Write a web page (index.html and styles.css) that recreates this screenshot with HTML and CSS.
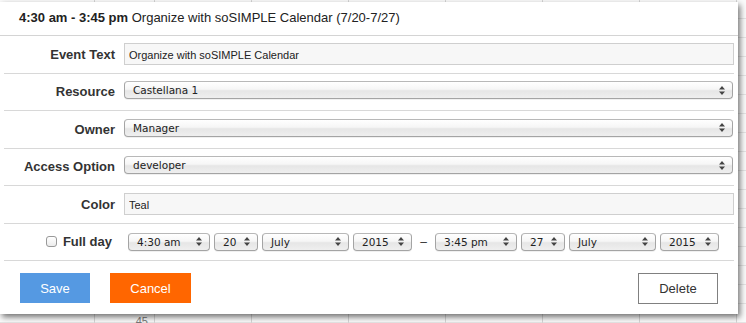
FILE: index.html
```html
<!DOCTYPE html>
<html lang="en">
<head>
    <meta charset="UTF-8">
    <title>Edit Event</title>
    <link rel="stylesheet" href="styles.css">
</head>
<body>
    <div class="calendar">
        <div class="cal-top"></div>
        <div class="cal-grid">
            <div class="cal-col gutter"></div>
            <div class="cal-col times"><span class="time-label">45</span></div>
            <div class="cal-col day"></div>
            <div class="cal-col day"></div>
            <div class="cal-col day"></div>
            <div class="cal-col day"></div>
            <div class="cal-col day"></div>
            <div class="cal-col day"></div>
            <div class="cal-col rest"></div>
        </div>
    </div>

    <div class="dialog">
        <div class="dialog-title"><strong>4:30 am - 3:45 pm</strong> Organize with soSIMPLE Calendar (7/20-7/27)</div>

        <div class="form">
            <div class="row">
                <label class="label">Event Text</label>
                <div class="control">
                    <input class="text-input" type="text" value="Organize with soSIMPLE Calendar">
                </div>
            </div>

            <div class="row">
                <label class="label">Resource</label>
                <div class="control">
                    <div class="select wide"><span>Castellana 1</span>
                        <svg class="arrows" width="6" height="9" viewBox="0 0 6 9"><path d="M3 0L6 3.5H0Z M3 9L6 5.5H0Z" fill="#444"/></svg>
                    </div>
                </div>
            </div>

            <div class="row">
                <label class="label">Owner</label>
                <div class="control">
                    <div class="select wide"><span>Manager</span>
                        <svg class="arrows" width="6" height="9" viewBox="0 0 6 9"><path d="M3 0L6 3.5H0Z M3 9L6 5.5H0Z" fill="#444"/></svg>
                    </div>
                </div>
            </div>

            <div class="row">
                <label class="label">Access Option</label>
                <div class="control">
                    <div class="select wide"><span>developer</span>
                        <svg class="arrows" width="6" height="9" viewBox="0 0 6 9"><path d="M3 0L6 3.5H0Z M3 9L6 5.5H0Z" fill="#444"/></svg>
                    </div>
                </div>
            </div>

            <div class="row">
                <label class="label">Color</label>
                <div class="control">
                    <input class="text-input" type="text" value="Teal">
                </div>
            </div>

            <div class="row">
                <label class="label fullday"><span class="checkbox"></span>Full day</label>
                <div class="control dates">
                    <div class="select w-time"><span>4:30 am</span>
                        <svg class="arrows" width="6" height="9" viewBox="0 0 6 9"><path d="M3 0L6 3.5H0Z M3 9L6 5.5H0Z" fill="#444"/></svg>
                    </div>
                    <div class="select w-day"><span>20</span>
                        <svg class="arrows" width="6" height="9" viewBox="0 0 6 9"><path d="M3 0L6 3.5H0Z M3 9L6 5.5H0Z" fill="#444"/></svg>
                    </div>
                    <div class="select w-month"><span>July</span>
                        <svg class="arrows" width="6" height="9" viewBox="0 0 6 9"><path d="M3 0L6 3.5H0Z M3 9L6 5.5H0Z" fill="#444"/></svg>
                    </div>
                    <div class="select w-year"><span>2015</span>
                        <svg class="arrows" width="6" height="9" viewBox="0 0 6 9"><path d="M3 0L6 3.5H0Z M3 9L6 5.5H0Z" fill="#444"/></svg>
                    </div>
                    <span class="dash">&ndash;</span>
                    <div class="select w-time"><span>3:45 pm</span>
                        <svg class="arrows" width="6" height="9" viewBox="0 0 6 9"><path d="M3 0L6 3.5H0Z M3 9L6 5.5H0Z" fill="#444"/></svg>
                    </div>
                    <div class="select w-day"><span>27</span>
                        <svg class="arrows" width="6" height="9" viewBox="0 0 6 9"><path d="M3 0L6 3.5H0Z M3 9L6 5.5H0Z" fill="#444"/></svg>
                    </div>
                    <div class="select w-month"><span>July</span>
                        <svg class="arrows" width="6" height="9" viewBox="0 0 6 9"><path d="M3 0L6 3.5H0Z M3 9L6 5.5H0Z" fill="#444"/></svg>
                    </div>
                    <div class="select w-year"><span>2015</span>
                        <svg class="arrows" width="6" height="9" viewBox="0 0 6 9"><path d="M3 0L6 3.5H0Z M3 9L6 5.5H0Z" fill="#444"/></svg>
                    </div>
                </div>
            </div>
        </div>

        <div class="actions">
            <button class="btn btn-save">Save</button>
            <button class="btn btn-cancel">Cancel</button>
            <button class="btn btn-delete">Delete</button>
        </div>
    </div>
</body>
</html>
```

FILE: styles.css
```css
* {
    box-sizing: border-box;
    margin: 0;
    padding: 0;
}

body {
    font-family: "Liberation Sans", Arial, sans-serif;
    background: #f4f4f4;
    width: 746px;
    height: 323px;
    overflow: hidden;
    position: relative;
}

/* calendar behind the dialog */
.calendar {
    height: 100%;
    display: flex;
    flex-direction: column;
}

.cal-top {
    height: 2px;
    background: linear-gradient(90deg, #e2e2e2 0, #e2e2e2 254px, #8a2a8a 254px, #8a2a8a 260px,
        #e2e2e2 260px, #e2e2e2 290px, #e6e6cf 290px, #e6e6cf 510px, #e2e2e2 510px);
}

.cal-grid {
    flex: 1;
    display: flex;
    background: repeating-linear-gradient(180deg, #fafafa 0, #fafafa 18px, #e4e4e4 18px, #e4e4e4 19px);
}

.cal-col {
    border-right: 1px solid #d6d6d6;
}

.gutter { width: 95px; }
.times { width: 60px; padding: 311px 6px 0 0; text-align: right; }
.day { width: 97px; }
.rest { flex: 1; border-right: none; }

.time-label {
    font-size: 11px;
    line-height: 12px;
    color: #777;
}

/* dialog */
.dialog {
    position: absolute;
    top: 2px;
    left: 0;
    width: 738px;
    height: 312px;
    background: #fff;
    box-shadow: 2px 3px 6px rgba(0, 0, 0, 0.55);
    display: flex;
    flex-direction: column;
}

.dialog-title {
    height: 34px;
    line-height: 31px;
    padding: 0 19px;
    font-size: 13px;
    color: #222;
    border-bottom: 1px solid #d4d4d4;
    white-space: nowrap;
}

.dialog-title strong {
    font-weight: 700;
}

.form {
    padding: 0 4px;
}

.row {
    height: 37.5px;
    display: flex;
    align-items: center;
    border-bottom: 1px solid #d8d8d8;
}

.label {
    width: 111px;
    flex-shrink: 0;
    text-align: right;
    font-size: 13px;
    font-weight: 700;
    color: #333;
}

.fullday {
    display: flex;
    align-items: center;
    justify-content: flex-end;
    gap: 6px;
    padding-right: 3px;
}

.checkbox {
    width: 11px;
    height: 11px;
    border: 1px solid #999;
    border-radius: 3px;
    background: linear-gradient(#fff, #ececec);
}

.control {
    flex: 1;
    margin-left: 9px;
    display: flex;
    align-items: center;
}

.text-input {
    width: 100%;
    height: 22px;
    border: 1px solid #cfcfcf;
    background: #f7f7f7;
    font-family: "Liberation Sans", Arial, sans-serif;
    font-size: 11px;
    color: #222;
    padding: 2px 4px 0;
    outline: none;
}

.select {
    height: 18px;
    display: flex;
    align-items: center;
    justify-content: space-between;
    padding: 0 7px 0 8px;
    border: 1px solid #a4a4a4;
    border-top-color: #b8b8b8;
    border-radius: 4px;
    background: linear-gradient(#ffffff 0%, #f6f6f6 45%, #e6e6e6 55%, #efefef 100%);
    box-shadow: 0 1px 0 rgba(0, 0, 0, 0.06);
    font-family: "DejaVu Sans", sans-serif;
    font-size: 10.5px;
    color: #222;
}

.wide {
    width: 100%;
    margin-right: 1px;
    margin-top: -3px;
}

.dates {
    padding-left: 4px;
    gap: 4px;
}

.w-time { width: 82px; }
.w-day { width: 44px; }
.w-month { width: 87px; }
.w-year { width: 59px; }

.dash {
    width: 15px;
    text-align: center;
    font-size: 12px;
    color: #333;
}

.actions {
    flex: 1;
    display: flex;
    align-items: flex-start;
    gap: 20px;
    padding: 12px 20px 0;
}

.btn {
    height: 30px;
    border: none;
    font-family: "Liberation Sans", Arial, sans-serif;
    font-size: 13px;
    color: #fff;
    cursor: pointer;
}

.btn-save {
    width: 70px;
    background: #5599e2;
}

.btn-cancel {
    width: 81px;
    background: #ff6600;
}

.btn-delete {
    width: 80px;
    height: 31px;
    margin-left: auto;
    background: #fff;
    border: 1px solid #808080;
    color: #333;
}
```
